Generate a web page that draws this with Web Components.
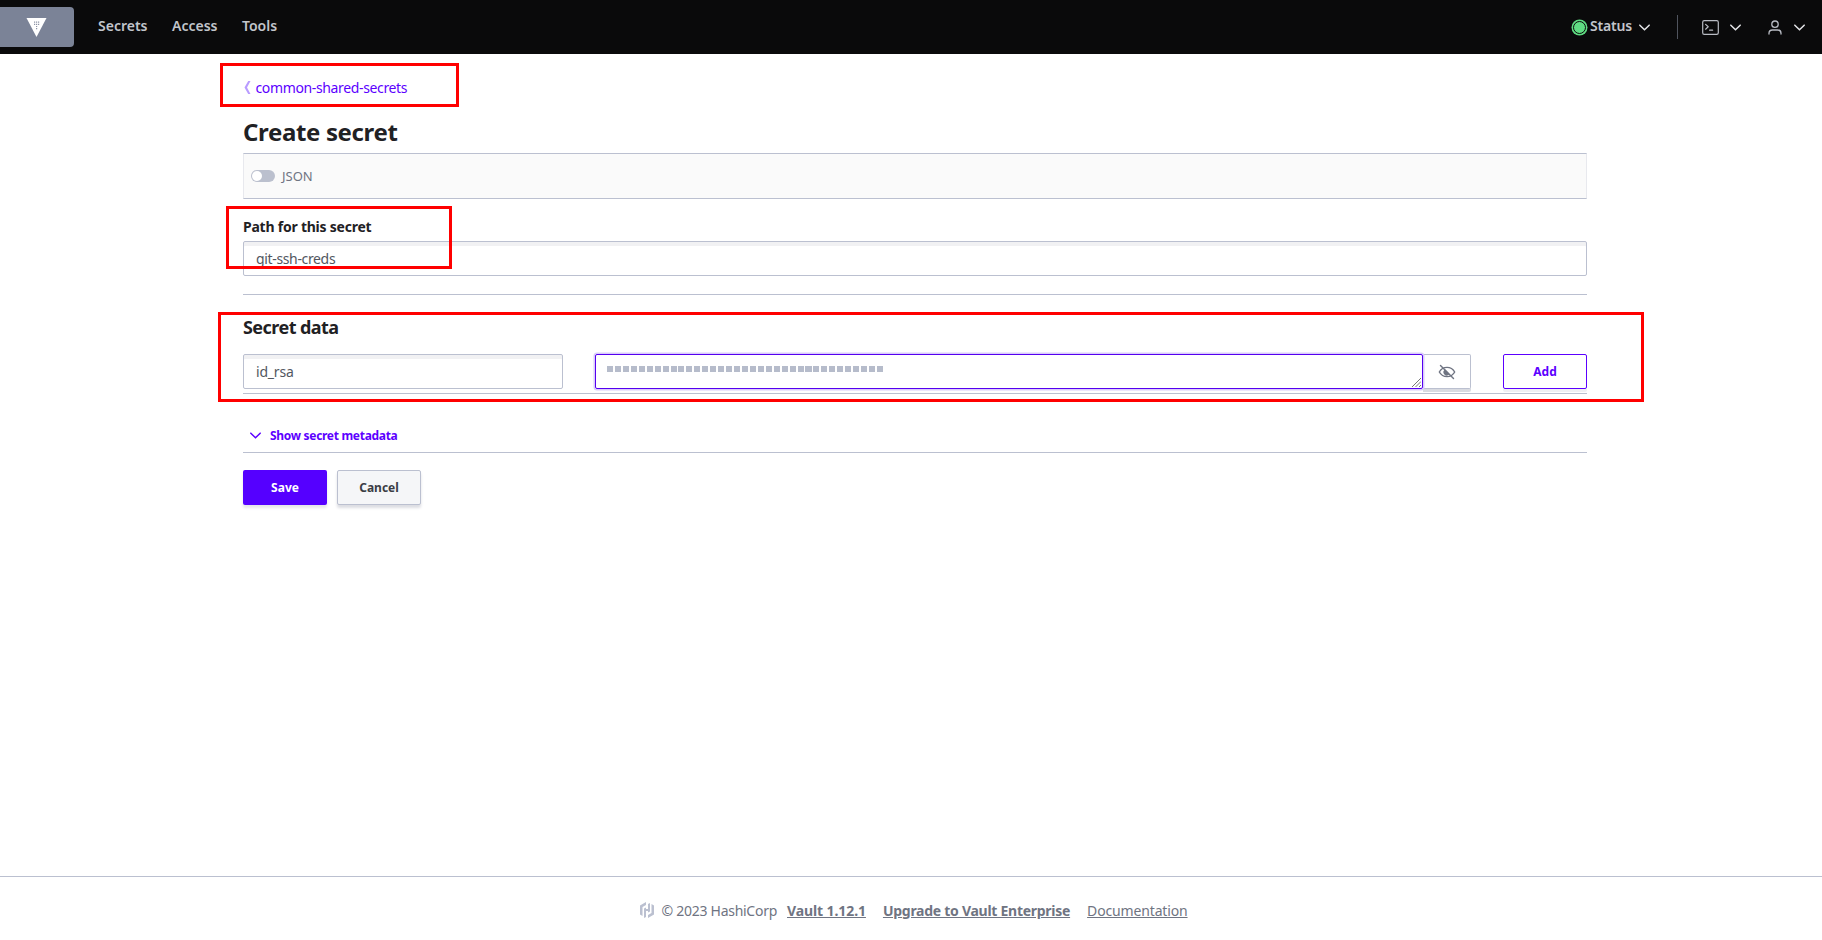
<!DOCTYPE html>
<html lang="en">
<head>
<meta charset="utf-8">
<title>Create secret</title>
<style>
  html, body { margin: 0; padding: 0; background: #fff; }
  body { font-family: "Noto Sans", "Open Sans", sans-serif; color: #1f2124; }
</style>
</head>
<body>
<vault-app>
  <vault-header slot="header"></vault-header>
  <vault-breadcrumb label="common-shared-secrets"></vault-breadcrumb>
  <page-title>Create secret</page-title>
  <json-toggle></json-toggle>
  <text-field label="Path for this secret" value="git-ssh-creds"></text-field>
  <section-title>Secret data</section-title>
  <kv-row key="id_rsa"></kv-row>
  <metadata-toggle>Show secret metadata</metadata-toggle>
  <form-actions></form-actions>
  <vault-footer slot="footer"></vault-footer>
</vault-app>
<mark-box style="left:220px;top:63px;width:239px;height:44px"></mark-box>
<mark-box style="left:226px;top:206px;width:226px;height:63px"></mark-box>
<mark-box style="left:218px;top:312px;width:1426px;height:90px"></mark-box>

<script>
// small helper so every element below reads the same
function shadow(el, html) {
  el.attachShadow({ mode: 'open' }).innerHTML = html;
}

const CHEVRON = (size, color) => `<svg width="${size}" height="${size}" viewBox="0 0 16 16" fill="none" stroke="${color}" stroke-width="1.6" stroke-linecap="round" stroke-linejoin="round"><path d="M3 5.5l5 5 5-5"/></svg>`;

class VaultApp extends HTMLElement {
  connectedCallback() {
    shadow(this, `
      <style>
        :host { display: flex; flex-direction: column; min-height: 940px; }
        main { flex: 1; width: 1344px; margin-left: 243px; display: block; }
      </style>
      <slot name="header"></slot>
      <main><slot></slot></main>
      <slot name="footer"></slot>`);
  }
}

class VaultHeader extends HTMLElement {
  connectedCallback() {
    shadow(this, `
      <style>
        :host { display: flex; align-items: center; height: 54px; background: #0a0a0b; color: #c2c5cb;
                font: 600 14px "Noto Sans", sans-serif; }
        .logo { width: 74px; height: 40px; background: #7b8397; border-radius: 0 4px 4px 0;
                display: flex; align-items: center; justify-content: center; padding-right: 1px; box-sizing: border-box; }
        nav { display: flex; gap: 24.5px; margin: 0 0 3px 24px; }
        .right { margin-left: auto; display: flex; align-items: center; }
        .item { display: flex; align-items: center; }
        .label { margin-bottom: 3px; letter-spacing: -.2px; }
        .dot { box-sizing: border-box; width: 13px; height: 13px; border-radius: 50%; background: #5fdc82; border: 1.5px solid #0a0a0b;
               box-shadow: 0 0 0 1.5px #5fdc82; margin-right: 4.5px; }
        .sep { width: 1px; height: 24px; background: #50545e; margin: 0 24px 0 25px; }
      </style>
      <div class="logo">
        <svg width="21" height="20" viewBox="0 0 21 20">
          <path d="M0.500 1h20L10.500 20z" fill="#fff"/>
          <path d="M8 4.500h1.200v1.200H8zM10 4.500h1.200v1.200H10zM12 4.500h1.200v1.200H12zM8 6.700h1.200v1.200H8zM10 6.700h1.200v1.200H10zM12 6.700h1.200v1.200H12zM10 8.900h1.200v1.200H10zM10 11.100h1.200v1.200H10z" fill="#8d94a6"/>
        </svg>
      </div>
      <nav><span>Secrets</span><span>Access</span><span>Tools</span></nav>
      <div class="right">
        <div class="item"><span class="dot"></span><span class="label">Status</span><span style="margin-left:5px;display:flex">${CHEVRON(15, '#e4e5e8')}</span></div>
        <div class="sep"></div>
        <div class="item">
          <svg width="17" height="15" viewBox="0 0 17 15" fill="none" stroke="#b9bcc4" stroke-width="1.2" stroke-linecap="round" stroke-linejoin="round"><rect x=".7" y=".7" width="15.600" height="13.600" rx="1.600"/><path d="M3.600 4.400l2.600 2.400-2.600 2.400M7.600 10.200h3"/></svg>
          <span style="margin-left:9px;display:flex">${CHEVRON(15, '#e4e5e8')}</span>
        </div>
        <div class="item" style="margin-left:25px;margin-right:15px">
          <svg width="14" height="15" viewBox="0 0 14 15" fill="none" stroke="#b9bcc4" stroke-width="1.3" stroke-linecap="round"><circle cx="7" cy="4.200" r="3.200"/><path d="M1 14v-.8c0-2 1.600-3.200 3.400-3.200h5.200c1.800 0 3.400 1.200 3.400 3.200v.8"/></svg>
          <span style="margin-left:10px;display:flex">${CHEVRON(15, '#e4e5e8')}</span>
        </div>
      </div>`);
  }
}

class VaultBreadcrumb extends HTMLElement {
  connectedCallback() {
    shadow(this, `
      <style>
        :host { display: flex; align-items: center; height: 24px; margin-top: 21px; font: 400 14px "Noto Sans", sans-serif; color: #5c00ff; letter-spacing: -.36px; }
        svg { margin: 0 5px 0 1px; }
      </style>
      <svg width="6.500" height="13" viewBox="0 0 6.500 13"><path d="M6.500 0L3 6.500l3.500 6.500H4.200L.5 6.500 4.200 0z" fill="#b99cff"/></svg>
      <span>${this.getAttribute('label')}</span>`);
  }
}

class PageTitle extends HTMLElement {
  connectedCallback() {
    shadow(this, `
      <style>
        :host { display: block; margin-top: 17px; font: 700 24px/32px "Noto Sans", sans-serif; color: #1f2124; letter-spacing: -.35px; }
      </style><slot></slot>`);
  }
}

class JsonToggle extends HTMLElement {
  connectedCallback() {
    shadow(this, `
      <style>
        :host { display: flex; align-items: center; box-sizing: border-box; height: 46px; margin-top: 5px; padding: 0 0 1px 7px;
                background: #fafafa; border: 1px solid #e8e9ee; border-top-color: #bbc0d0; border-bottom-color: #bbc0d0;
                font: 400 13px "Noto Sans", sans-serif; color: #6f7482; }
        .track { width: 24px; height: 12px; border-radius: 6px; background: #bbc0ce; position: relative; margin-right: 7px; }
        .knob { position: absolute; left: 1px; top: 1px; width: 10px; height: 10px; border-radius: 50%; background: #fff; }
      </style>
      <span class="track"><span class="knob"></span></span><span>JSON</span>`);
  }
}

class TextField extends HTMLElement {
  connectedCallback() {
    shadow(this, `
      <style>
        :host { display: block; padding-bottom: 18px; border-bottom: 1px solid #bbc0d0; margin-top: 18px; font-family: "Noto Sans", sans-serif; }
        label { display: block; font-weight: 700; font-size: 14px; line-height: 20px; margin-bottom: 4px; color: #1f2124; letter-spacing: -.23px; }
        .input { box-sizing: border-box; height: 35px; border: 1px solid #bbc0d0; border-radius: 2px; padding: 0 12px;
                 display: flex; align-items: center; font-size: 14px; color: #525761; letter-spacing: -.35px;
                 box-shadow: inset 0 4px 0 #f1f1f3; }
      </style>
      <label>${this.getAttribute('label')}</label>
      <div class="input">${this.getAttribute('value')}</div>`);
  }
}

class SectionTitle extends HTMLElement {
  connectedCallback() {
    shadow(this, `
      <style>
        :host { display: block; margin-top: 19px; font: 700 18px/26px "Noto Sans", sans-serif; color: #1f2124; letter-spacing: -.55px; }
      </style><slot></slot>`);
  }
}

class KvRow extends HTMLElement {
  connectedCallback() {
    shadow(this, `
      <style>
        :host { display: flex; box-sizing: border-box; height: 40px; margin-top: 14px; border-bottom: 1px solid #bbc0d0; font-family: "Noto Sans", sans-serif; }
        .key { box-sizing: border-box; width: 320px; height: 35px; border: 1px solid #bbc0d0; border-radius: 2px; padding: 0 12px;
               display: flex; align-items: center; font-size: 14px; color: #525761; letter-spacing: -.2px; box-shadow: inset 0 4px 0 #f1f1f3; }
        .secret { box-sizing: border-box; position: relative; width: 828px; height: 35px; margin-left: 32px; border: 1px solid #5500f0;
                  border-radius: 2px; box-shadow: 0 0 0 1.500px #d9ccfb; }
        .dots { position: absolute; left: 11px; top: 11px; width: 276px; height: 6px;
                background: repeating-linear-gradient(90deg, #b6bccb 0 6px, transparent 6px 7.940px); }
        .grip { position: absolute; right: 1px; bottom: 1px; }
        .eye { box-sizing: border-box; width: 48px; height: 35px; border: 1px solid #bbc0d0; border-left: 0; border-radius: 0 2px 2px 0;
               display: flex; align-items: center; justify-content: center; box-shadow: 0 3px 0 #d9dbe1; }
        .add { box-sizing: border-box; width: 84px; height: 35px; margin-left: 32px; border: 1px solid #5c00ff; border-radius: 2px;
               display: flex; align-items: center; justify-content: center; font-weight: 700; font-size: 12px; color: #5c00ff;
               box-shadow: 0 3px 0 #f0f0f3; }
      </style>
      <div class="key">${this.getAttribute('key')}</div>
      <div class="secret">
        <div class="dots"></div>
        <svg class="grip" width="9" height="9" viewBox="0 0 9 9" stroke="#555" stroke-width=".8"><path d="M0 9l9-9M3.500 9L9 3.500M7 9l2-2"/></svg>
      </div>
      <div class="eye">
        <svg width="18" height="16" viewBox="0 0 18 16" fill="none" stroke="#6f7482" stroke-width="1.400" stroke-linecap="round" stroke-linejoin="round">
          <path d="M1.300 8C3 5 5.700 3.400 9 3.400S15 5 16.700 8C15 11 12.300 12.600 9 12.600S3 11 1.300 8z"/>
          <path d="M2.500 1.500l13 13"/>
          <path d="M7 6.300a2.600 2.600 0 0 0 3.600 3.800z" fill="#6f7482"/>
        </svg>
      </div>
      <div class="add">Add</div>`);
  }
}

class MetadataToggle extends HTMLElement {
  connectedCallback() {
    shadow(this, `
      <style>
        :host { display: flex; align-items: center; box-sizing: border-box; height: 59px; padding: 32px 0 8px 5px; border-bottom: 1px solid #bbc0d0;
                font: 700 12px "Noto Sans", sans-serif; color: #5c00ff; letter-spacing: -.3px; }
        svg { margin-right: 7px; }
      </style>
      ${CHEVRON(15, '#5c00ff')}<slot></slot>`);
  }
}

class FormActions extends HTMLElement {
  connectedCallback() {
    shadow(this, `
      <style>
        :host { display: flex; gap: 10px; margin-top: 17px; font: 700 12px "Noto Sans", sans-serif; }
        div { box-sizing: border-box; width: 84px; height: 35px; border-radius: 2px; display: flex; align-items: center; justify-content: center; }
        .save { background: #5500ff; color: #fff; box-shadow: 0 3px 3px #e6e6ea; }
        .cancel { background: #f5f6f8; border: 1px solid #bbc0d0; color: #3b3d45; box-shadow: 0 3px 3px #dcdde2; }
      </style>
      <div class="save">Save</div><div class="cancel">Cancel</div>`);
  }
}

class VaultFooter extends HTMLElement {
  connectedCallback() {
    shadow(this, `
      <style>
        :host { display: flex; align-items: center; justify-content: center; box-sizing: border-box; height: 64px; border-top: 1px solid #bbc0d0;
                padding: 3px 0 0 6px; font: 400 14px "Noto Sans", sans-serif; color: #6f7482; letter-spacing: -.27px; }
        svg { margin-right: 7px; }
        a { color: #6f7482; text-decoration: underline; }
        .b { font-weight: 700; }
      </style>
      <svg width="14" height="16" viewBox="0 0 14 16" fill="#bbc0d0"><path d="M6 0L0 3.500v9L2.500 14V5L6 3zM8 2v5H6V5.500L4 6.600V16l2-1.100V9h2v1.600l2-1.100V1zM11.500 2v9L8 13v3l6-3.500v-9z"/></svg>
      <span>© 2023 HashiCorp</span>
      <a class="b" style="margin-left:10px;letter-spacing:-.1px">Vault 1.12.1</a>
      <a class="b" style="margin-left:17px">Upgrade to Vault Enterprise</a>
      <a style="margin-left:17px;letter-spacing:-.15px">Documentation</a>`);
  }
}

// red annotation rectangles drawn over the screenshot
class MarkBox extends HTMLElement {
  connectedCallback() {
    shadow(this, `
      <style>
        :host { display: block; position: absolute; box-sizing: border-box; border: 3px solid #ff0000; pointer-events: none; }
      </style>`);
  }
}

customElements.define('vault-app', VaultApp);
customElements.define('vault-header', VaultHeader);
customElements.define('vault-breadcrumb', VaultBreadcrumb);
customElements.define('page-title', PageTitle);
customElements.define('json-toggle', JsonToggle);
customElements.define('text-field', TextField);
customElements.define('section-title', SectionTitle);
customElements.define('kv-row', KvRow);
customElements.define('metadata-toggle', MetadataToggle);
customElements.define('form-actions', FormActions);
customElements.define('vault-footer', VaultFooter);
customElements.define('mark-box', MarkBox);
</script>
</body>
</html>
